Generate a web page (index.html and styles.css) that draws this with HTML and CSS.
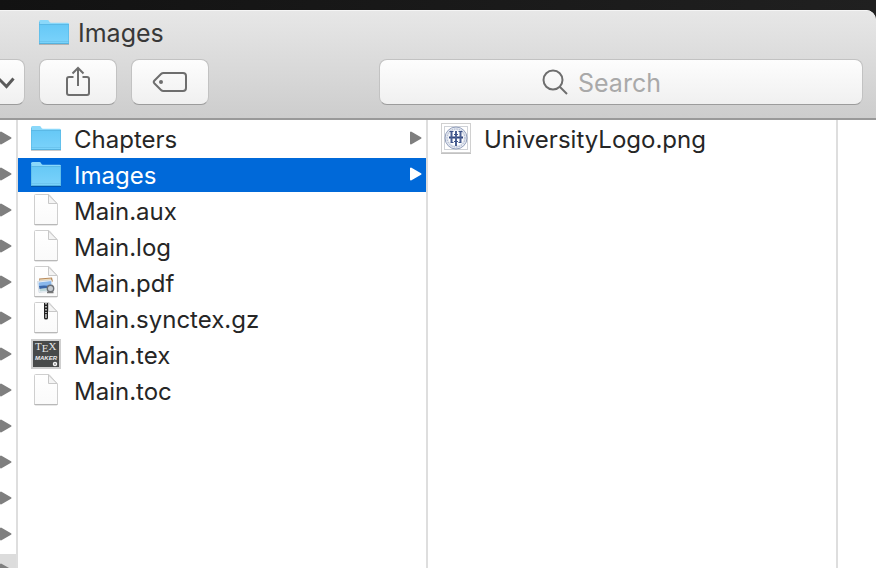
FILE: index.html
```html
<!DOCTYPE html>
<html lang="en">
<head>
  <meta charset="utf-8">
  <title>Images</title>
  <link rel="stylesheet" href="styles.css">
</head>
<body>

  <!-- shared icons -->
  <svg class="defs" width="0" height="0" aria-hidden="true">
    <defs>
      <linearGradient id="folderFill" x1="0" y1="0" x2="0" y2="1">
        <stop offset="0" stop-color="#66c8f6"/>
        <stop offset="1" stop-color="#7bd3fb"/>
      </linearGradient>
      <linearGradient id="pageFill" x1="0" y1="0" x2="0" y2="1">
        <stop offset="0" stop-color="#ffffff"/>
        <stop offset="1" stop-color="#fafafa"/>
      </linearGradient>
    </defs>
    <symbol id="folder" viewBox="0 0 32 32">
      <path d="M1 28h30v1H1z" fill="#000" opacity=".2"/>
      <path d="M1 5.500q0-1.500 1.500-1.500h7q1 0 1.500 1l.5 1q.4.7 1.500.7h16.500q1.500 0 1.500 1.300v4H1z" fill="#8ad8fa"/>
      <path d="M1 8.500h30V27q0 1-1 1H2q-1 0-1-1z" fill="url(#folderFill)"/>
      <path d="M1 8.500h30" stroke="#5bb9e6"/>
      <path d="M1 25.500h30" stroke="#6cc5ef"/>
      <path d="M1 27.500h30" stroke="#55b2de"/>
      <path d="M1.500 6v22M30.500 8v20" stroke="#59b8e4" opacity=".6"/>
    </symbol>
    <symbol id="page" viewBox="0 0 32 32">
      <path d="M4.500 1.500q0-1 1-1h13.500l8.500 9.500v20q0 1-1 1h-21q-1 0-1-1z" fill="url(#pageFill)" stroke="#cfcfcf"/>
      <path d="M4.500 30.500h23" stroke="#b8b8b8"/>
      <path d="M18.500 1v8.500h8.500z" fill="#f4f4f4" stroke="#c8c8c8" stroke-linejoin="round"/>
    </symbol>
    <symbol id="arrow" viewBox="0 0 12 14">
      <path d="M1 1.500v11l9.500-5.500z" fill="currentColor" stroke="currentColor" stroke-width="2" stroke-linejoin="round"/>
    </symbol>
  </svg>

  <div class="window">
    <header class="toolbar">
      <div class="title">
        <svg class="icon" viewBox="0 0 32 32"><use href="#folder"/></svg>
        <h1>Images</h1>
      </div>

      <div class="tools">
        <button class="tool-button cut" aria-label="View options">
          <svg width="24" height="44" viewBox="0 0 24 44" fill="none" stroke="#5a5a5a" stroke-width="3">
            <path d="M-1.500 18.500l8 8 7-8"/>
          </svg>
        </button>
        <button class="tool-button" aria-label="Share">
          <svg width="26" height="34" viewBox="0 0 26 34" fill="none" stroke="#6e6e6e" stroke-width="2">
            <path d="M8.500 12H4q-2 0-2 2v14q0 2 2 2h18q2 0 2-2V14q0-2-2-2h-4.500"/>
            <path d="M13 21V3M7.500 8.500L13 3l5.500 5.500"/>
          </svg>
        </button>
        <button class="tool-button" aria-label="Edit tags">
          <svg width="36" height="24" viewBox="0 0 36 24" fill="none" stroke="#6e6e6e" stroke-width="2">
            <path d="M11.500 3H31q3 0 3 3v12q0 3-3 3H11.500q-1.500 0-2.500-1L2.500 13.500q-1.500-1.500 0-3L9 4q1-1 2.500-1z"/>
            <circle cx="9" cy="12" r="2" fill="#6e6e6e" stroke="none"/>
          </svg>
        </button>
        <label class="search">
          <svg width="26" height="26" viewBox="0 0 26 26" fill="none" stroke="#6e6e6e" stroke-width="2">
            <circle cx="11" cy="11" r="9.500"/>
            <path d="M17.500 17.500l7.500 7.500"/>
          </svg>
          <input type="search" placeholder="Search" aria-label="Search">
        </label>
      </div>
    </header>

    <main class="columns">
      <ul class="column parent">
        <li><svg class="arrow"><use href="#arrow"/></svg></li>
        <li><svg class="arrow"><use href="#arrow"/></svg></li>
        <li><svg class="arrow"><use href="#arrow"/></svg></li>
        <li><svg class="arrow"><use href="#arrow"/></svg></li>
        <li><svg class="arrow"><use href="#arrow"/></svg></li>
        <li><svg class="arrow"><use href="#arrow"/></svg></li>
        <li><svg class="arrow"><use href="#arrow"/></svg></li>
        <li><svg class="arrow"><use href="#arrow"/></svg></li>
        <li><svg class="arrow"><use href="#arrow"/></svg></li>
        <li><svg class="arrow"><use href="#arrow"/></svg></li>
        <li><svg class="arrow"><use href="#arrow"/></svg></li>
        <li><svg class="arrow"><use href="#arrow"/></svg></li>
        <li class="open"><svg class="arrow"><use href="#arrow"/></svg></li>
      </ul>

      <ul class="column">
        <li>
          <svg class="icon" viewBox="0 0 32 32"><use href="#folder"/></svg>
          <span class="name">Chapters</span>
          <svg class="arrow"><use href="#arrow"/></svg>
        </li>
        <li class="selected">
          <svg class="icon" viewBox="0 0 32 32"><use href="#folder"/></svg>
          <span class="name">Images</span>
          <svg class="arrow"><use href="#arrow"/></svg>
        </li>
        <li>
          <svg class="icon" viewBox="0 0 32 32"><use href="#page"/></svg>
          <span class="name">Main.aux</span>
        </li>
        <li>
          <svg class="icon" viewBox="0 0 32 32"><use href="#page"/></svg>
          <span class="name">Main.log</span>
        </li>
        <li>
          <svg class="icon" viewBox="0 0 32 32">
            <use href="#page"/>
            <path d="M9 12.500l13-1 1 4-13 2z" fill="#b98a5a"/>
            <path d="M10 13.500l11-1v3l-11 1z" fill="#e8d9bd"/>
            <path d="M7.500 15.500l14-1.500 1.500 11-14 1.500z" fill="#f4f8fc" stroke="#c3ccd8" stroke-width=".6"/>
            <path d="M8.500 16.500l12.500-1.500.7 5.500-12.700.5z" fill="#8ab8ec"/>
            <path d="M9 20q6-1 13 .5l.3 1.500L9.500 23z" fill="#3a66a8"/>
            <path d="M9.500 23l13-1.500.3 2.500-13 1.500z" fill="#bcd5d8"/>
            <circle cx="20.500" cy="22.500" r="3.200" fill="#c6cbd0" stroke="#6c7076" stroke-width="1.400"/>
            <path d="M17 26.500h6.500" stroke="#777" stroke-width="1.500"/>
          </svg>
          <span class="name">Main.pdf</span>
        </li>
        <li>
          <svg class="icon" viewBox="0 0 32 32">
            <use href="#page"/>
            <path d="M14 1h4v15q0 1.500-2 1.500T14 16z" fill="#222"/>
            <path d="M16 1v10" stroke="#ddd" stroke-width="1.500" stroke-dasharray="1.500 1.500"/>
            <path d="M16 12v4" stroke="#eee" stroke-width="1.200"/>
          </svg>
          <span class="name">Main.synctex.gz</span>
        </li>
        <li>
          <svg class="icon" viewBox="0 0 32 32">
            <rect x="2" y="2" width="28" height="28" fill="#484a4a" stroke="#cfcfcf" stroke-width="2"/>
            <text class="tex" x="5" y="12">T<tspan dy="2">E</tspan><tspan dy="-2">X</tspan></text>
            <text class="maker" x="5" y="22">MAKER</text>
            <circle cx="25" cy="26" r="1.500" fill="none" stroke="#f4f4f4" stroke-width="1.500"/>
          </svg>
          <span class="name">Main.tex</span>
        </li>
        <li>
          <svg class="icon" viewBox="0 0 32 32"><use href="#page"/></svg>
          <span class="name">Main.toc</span>
        </li>
      </ul>

      <ul class="column">
        <li>
          <svg class="icon" viewBox="0 0 32 32">
            <rect x="1" y="2" width="30" height="30" fill="#999" opacity=".6"/>
            <rect x="1.500" y="1.500" width="29" height="29" fill="#fff" stroke="#d0d0d0"/>
            <rect x="4.500" y="4.500" width="23" height="23" fill="#fff" stroke="#d0d3d8"/>
            <circle cx="16" cy="16" r="11" fill="#e6eaf2" stroke="#93a0bd"/>
            <circle cx="16" cy="16" r="9" fill="none" stroke="#a3afc9" stroke-dasharray="1.500 1"/>
            <circle cx="16" cy="16" r="7.500" fill="#fff"/>
            <path d="M9 15.500h14" stroke="#2c437c" stroke-width="2"/>
            <path d="M16 9v15M11.500 10v10M20.500 10v10" stroke="#4a5f92" stroke-width="2"/>
            <path d="M9.500 9.500h4M18.500 9.500h4M10.500 20.500h3M18.500 20.500h3M14 12.500h4M14 19.500h4" stroke="#3d5389"/>
          </svg>
          <span class="name">UniversityLogo.png</span>
        </li>
      </ul>

      <div class="column rest"></div>
    </main>
  </div>

</body>
</html>
```
FILE: styles.css
```css
* {
  box-sizing: border-box;
}

body {
  margin: 0;
  height: 100vh;
  padding-top: 10px;
  overflow: hidden;
  background: linear-gradient(to right, #121212, #202020);
  font-family: Inter, Roboto, "Liberation Sans", sans-serif;
  color: #262626;
}

.defs {
  position: absolute;
}

.window {
  display: flex;
  flex-direction: column;
  height: 100%;
  overflow: hidden;
  background: #fff;
  border-top-right-radius: 10px;
}

.toolbar {
  padding: 5px 13px 13px 0;
  background: linear-gradient(#e7e7e7, #cdcdcd);
  border-top: 1px solid #f5f5f5;
  border-bottom: 2px solid #999;
}

.title {
  display: flex;
  gap: 8px;
  height: 32px;
  margin-bottom: 11px;
  padding-left: 38px;
}

.title h1 {
  margin: 0;
  font-size: 25px;
  font-weight: 400;
  line-height: 34px;
  color: #383838;
}

.tools {
  display: flex;
  gap: 14px;
}

.tool-button,
.search {
  display: flex;
  align-items: center;
  justify-content: center;
  height: 46px;
  padding: 0;
  background: linear-gradient(#fdfdfd, #f0f0f0);
  border: 1px solid #c2c2c2;
  border-bottom-color: #9c9c9c;
  border-radius: 8px;
}

.tool-button {
  width: 78px;
}

.tool-button.cut {
  width: 25px;
  border-left: none;
  border-radius: 0 8px 8px 0;
}

.search {
  flex: 1;
  gap: 10px;
  margin-left: 156px;
}

.search input {
  width: 122px;
  padding: 2px 0 0;
  border: none;
  outline: none;
  background: none;
  font: inherit;
  font-size: 25px;
}

.search input::placeholder {
  color: #a9a9a9;
}

.columns {
  display: flex;
  flex: 1;
  min-height: 0;
}

.column {
  flex: 0 0 410px;
  margin: 0;
  padding: 2px 0 0;
  border-right: 2px solid #dedede;
  list-style: none;
  overflow: hidden;
}

.column.parent {
  flex-basis: 18px;
}

.column.rest {
  flex: 1;
  border-right: none;
}

.column li {
  display: flex;
  gap: 12px;
  height: 34px;
  margin-bottom: 2px;
  padding: 0 4px 0 12px;
}

.column.parent li {
  padding-left: 0;
}

.column li.open {
  background: #dcdcdc;
}

.column li.selected {
  background: #0069d9;
  color: #fff;
}

.icon {
  flex: none;
  width: 32px;
  height: 32px;
}

.name {
  flex: 1;
  font-size: 24px;
  line-height: 36px;
  white-space: nowrap;
}

.arrow {
  flex: none;
  width: 12px;
  height: 14px;
  margin-top: 9px;
  color: #7f7f7f;
}

.selected .arrow {
  color: #fff;
}

.tex {
  font-family: "Liberation Serif", serif;
  font-size: 11px;
  fill: #e6e6e6;
}

.maker {
  font-family: "Liberation Sans", sans-serif;
  font-size: 6px;
  font-style: italic;
  font-weight: bold;
  fill: #eee;
}
```
